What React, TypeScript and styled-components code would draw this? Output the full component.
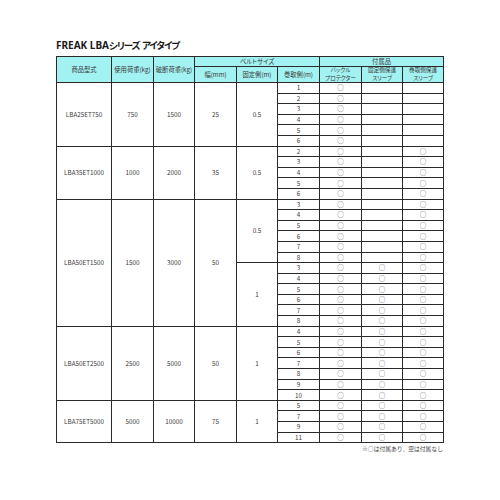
import React from 'react';
import styled, { createGlobalStyle } from 'styled-components';

const GlobalStyle = createGlobalStyle`
  html, body { margin: 0; padding: 0; background: #ffffff; }
  body { font-family: "Noto Sans CJK JP", "Noto Sans", sans-serif; }
`;

const Page = styled.div`
  width: 500px;
  height: 500px;
  box-sizing: border-box;
  padding: 39px 0 0 56px;
  background: #ffffff;
`;

const Sheet = styled.div`
  width: 387px;
  display: flex;
  flex-direction: column;
`;

const Title = styled.h1`
  margin: 0 0 5px 0;
  font-family: "Noto Sans", "Noto Sans CJK JP", sans-serif;
  font-size: 10px;
  line-height: 12px;
  font-weight: 700;
  color: #1a1a1a;
  white-space: nowrap;
`;

const Kana = styled.span`
  font-family: "Noto Sans CJK JP", sans-serif;
  font-size: 9.5px;
  letter-spacing: -1.1px;
  font-feature-settings: "palt";
`;

const Table = styled.table`
  border-collapse: collapse;
  table-layout: fixed;
  width: 387px;
  font-family: "Noto Sans CJK JP", "Noto Sans", sans-serif;
  font-size: 6.3px;
  color: #3a3a3a;
`;

const Head = styled.th<{ $h?: number }>`
  background: #a3f2f2;
  border: 1px solid #2a2a2a;
  padding: 0;
  height: ${(p) => p.$h ?? 10}px;
  font-weight: 400;
  text-align: center;
  vertical-align: middle;
  line-height: 7px;
  white-space: nowrap;
  font-feature-settings: "palt";
`;

const TwoLine = styled.span`
  display: flex;
  flex-direction: column;
  align-items: center;
  font-size: 5.6px;
  line-height: 7.5px;
`;

const Cell = styled.td`
  border: 1px solid #2a2a2a;
  padding: 0;
  height: 9.6px;
  text-align: center;
  vertical-align: middle;
  line-height: 7px;
  white-space: nowrap;
`;

const Mark = styled.span`
  font-size: 6.5px;
  color: #555;
`;

const Note = styled.div`
  margin-top: 2px;
  text-align: right;
  font-size: 5.8px;
  line-height: 8px;
  color: #444;
  white-space: nowrap;
`;

type Sub = { fixed: string; rows: number[]; acc: [boolean, boolean, boolean] };
type Group = { model: string; wll: string; brk: string; width: string; subs: Sub[] };

const range = (a: number, b: number) => Array.from({ length: b - a + 1 }, (_, i) => a + i);

const groups: Group[] = [
  { model: 'LBA25ET750', wll: '750', brk: '1500', width: '25', subs: [{ fixed: '0.5', rows: range(1, 6), acc: [true, false, false] }] },
  { model: 'LBA35ET1000', wll: '1000', brk: '2000', width: '35', subs: [{ fixed: '0.5', rows: range(2, 6), acc: [true, false, true] }] },
  {
    model: 'LBA50ET1500', wll: '1500', brk: '3000', width: '50',
    subs: [
      { fixed: '0.5', rows: range(3, 8), acc: [true, false, true] },
      { fixed: '1', rows: range(3, 8), acc: [true, true, true] },
    ],
  },
  { model: 'LBA50ET2500', wll: '2500', brk: '5000', width: '50', subs: [{ fixed: '1', rows: range(4, 10), acc: [true, true, true] }] },
  { model: 'LBA75ET5000', wll: '5000', brk: '10000', width: '75', subs: [{ fixed: '1', rows: [5, 7, 9, 11], acc: [true, true, true] }] },
];

const colWidths = [55, 42, 41, 42, 41, 42, 42, 41, 41];

export default function App() {
  const body: React.ReactNode[] = [];
  groups.forEach((g, gi) => {
    const total = g.subs.reduce((n, s) => n + s.rows.length, 0);
    g.subs.forEach((s, si) => {
      s.rows.forEach((r, ri) => {
        const first = si === 0 && ri === 0;
        body.push(
          <tr key={`${gi}-${si}-${ri}`}>
            {first && (
              <>
                <Cell rowSpan={total}>{g.model}</Cell>
                <Cell rowSpan={total}>{g.wll}</Cell>
                <Cell rowSpan={total}>{g.brk}</Cell>
                <Cell rowSpan={total}>{g.width}</Cell>
              </>
            )}
            {ri === 0 && <Cell rowSpan={s.rows.length}>{s.fixed}</Cell>}
            <Cell>{r}</Cell>
            {s.acc.map((a, ai) => (
              <Cell key={ai}>{a ? <Mark>○</Mark> : null}</Cell>
            ))}
          </tr>
        );
      });
    });
  });

  return (
    <>
      <GlobalStyle />
      <Page>
        <Sheet>
          <Title>
            FREAK LBA<Kana>シリーズ</Kana> <Kana>アイタイプ</Kana>
          </Title>
          <Table>
            <colgroup>
              {colWidths.map((w, i) => (
                <col key={i} style={{ width: w }} />
              ))}
            </colgroup>
            <thead>
              <tr>
                <Head rowSpan={2}>商品型式</Head>
                <Head rowSpan={2}>使用荷重(kg)</Head>
                <Head rowSpan={2}>破断荷重(kg)</Head>
                <Head colSpan={3} $h={9}>ベルトサイズ</Head>
                <Head colSpan={3} $h={9}>付属品</Head>
              </tr>
              <tr>
                <Head $h={14}>幅(mm)</Head>
                <Head $h={14}>固定側(m)</Head>
                <Head $h={14}>巻取側(m)</Head>
                <Head $h={14}>
                  <TwoLine>
                    <span>バックル</span>
                    <span>プロテクター</span>
                  </TwoLine>
                </Head>
                <Head $h={14}>
                  <TwoLine>
                    <span>固定側保護</span>
                    <span>スリーブ</span>
                  </TwoLine>
                </Head>
                <Head $h={14}>
                  <TwoLine>
                    <span>巻取側保護</span>
                    <span>スリーブ</span>
                  </TwoLine>
                </Head>
              </tr>
            </thead>
            <tbody>{body}</tbody>
          </Table>
          <Note>※○は付属あり、空は付属なし</Note>
        </Sheet>
      </Page>
    </>
  );
}
